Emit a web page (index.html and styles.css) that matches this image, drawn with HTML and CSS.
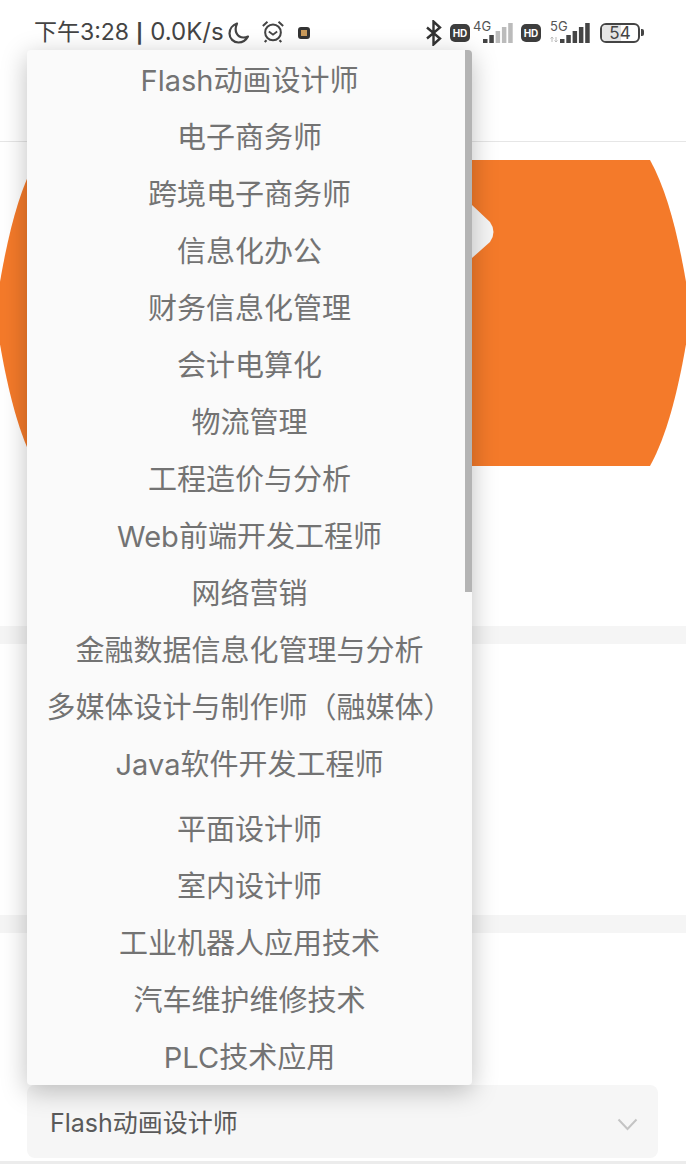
FILE: index.html
```html
<!DOCTYPE html>
<html lang="zh-CN">

<head>
  <meta charset="UTF-8" />
  <meta name="viewport" content="width=device-width, initial-scale=1.0" />
  <title>专业选择</title>
  <link rel="stylesheet" href="styles.css">
</head>

<body>
  <div class="page">
    <div class="status-bar">
      <div class="status-left">
        <span class="status-time">下午3:28<span class="status-sep">|</span><span class="status-speed">0.0K/s</span></span>
        <svg class="icon-moon" width="24" height="24" viewBox="0 0 24 24">
          <path d="M10 2.500C5.500 4 2.500 8 2.500 12.500c0 5 4 9 9 9 4 0 7.500-2.300 9.500-6-1.500.7-3 1-4.500 1-6 0-10-6-6.500-14z" fill="none" stroke="#444" stroke-width="2.200" stroke-linejoin="round" />
        </svg>
        <svg class="icon-alarm" width="24" height="24" viewBox="0 0 26 26">
          <circle cx="13" cy="14.500" r="8.500" fill="none" stroke="#444" stroke-width="2.200" />
          <path d="M8.500 13.500l4.500 3.500 4.500-3.500" fill="none" stroke="#444" stroke-width="2" />
          <path d="M2 7.500L7 3M24 7.500L19 3M6 23l-2 2M20 23l2 2" fill="none" stroke="#444" stroke-width="2.200" />
        </svg>
        <span class="notify-dot"></span>
      </div>
      <div class="status-right">
        <svg class="icon-bt" width="17" height="26" viewBox="0 0 17 26">
          <path d="M2 7.500l13 11-6.500 6V1.500l6.500 6-13 11" fill="none" stroke="#333" stroke-width="2.400" />
        </svg>
        <span class="hd-badge">HD</span>
        <svg class="icon-signal sim-one" width="40" height="32" viewBox="0 0 40 32">
          <text x="0" y="14" class="net-label">4G</text>
          <rect x="10" y="22" width="4.500" height="4" fill="#444" />
          <rect x="16.300" y="18" width="4.500" height="8" fill="#444" />
          <rect x="22.600" y="14" width="4.500" height="12" fill="#bbb" />
          <rect x="28.900" y="10" width="4.500" height="16" fill="#bbb" />
          <rect x="35.200" y="6" width="4.500" height="20" fill="#bbb" />
        </svg>
        <span class="hd-badge">HD</span>
        <svg class="icon-signal sim-two" width="41" height="32" viewBox="0 0 41 32">
          <text x="0" y="14" class="net-label">5G</text>
          <path d="M2 20v5M0.500 21.500L2 20l1.500 1.500M6 20v5M4.500 23.500L6 25l1.500-1.500" fill="none" stroke="#bbb" stroke-width="1" />
          <rect x="10" y="22" width="4.500" height="4" fill="#444" />
          <rect x="16.300" y="18" width="4.500" height="8" fill="#444" />
          <rect x="22.600" y="14" width="4.500" height="12" fill="#444" />
          <rect x="28.900" y="10" width="4.500" height="16" fill="#444" />
          <rect x="35.200" y="6" width="4.500" height="20" fill="#444" />
        </svg>
        <div class="battery">
          <span class="battery-fill"></span>
          <span class="battery-text">54</span>
        </div>
        <span class="battery-nub"></span>
      </div>
    </div>

    <div class="top-bar"></div>

    <div class="banner">
      <svg width="686" height="306" viewBox="0 0 686 306">
        <path d="M36 0H650C670 36 682 92 691 153C682 214 670 270 650 306H36C16 270 4 214 -5 153C4 92 16 36 36 0Z" fill="#f47a2a" />
        <path d="M440 26L472 45L490 62Q497 72 490 82L472 98L440 118Z" fill="#f6f6f6" />
      </svg>
    </div>

    <div class="section section-first"></div>
    <div class="section section-second"></div>

    <div class="section section-last">
      <div class="select-box">
        <span class="select-value">Flash动画设计师</span>
        <svg class="select-arrow" width="21" height="13" viewBox="0 0 21 13">
          <path d="M1.500 1.500L10.500 11L19.500 1.500" fill="none" stroke="#c4c4c4" stroke-width="2" />
        </svg>
      </div>
    </div>

    <div class="dropdown">
      <div class="dropdown-item">Flash动画设计师</div>
      <div class="dropdown-item">电子商务师</div>
      <div class="dropdown-item">跨境电子商务师</div>
      <div class="dropdown-item">信息化办公</div>
      <div class="dropdown-item">财务信息化管理</div>
      <div class="dropdown-item">会计电算化</div>
      <div class="dropdown-item">物流管理</div>
      <div class="dropdown-item">工程造价与分析</div>
      <div class="dropdown-item">Web前端开发工程师</div>
      <div class="dropdown-item">网络营销</div>
      <div class="dropdown-item">金融数据信息化管理与分析</div>
      <div class="dropdown-item">多媒体设计与制作师（融媒体）</div>
      <div class="dropdown-item group-end">Java软件开发工程师</div>
      <div class="dropdown-item">平面设计师</div>
      <div class="dropdown-item">室内设计师</div>
      <div class="dropdown-item">工业机器人应用技术</div>
      <div class="dropdown-item">汽车维护维修技术</div>
      <div class="dropdown-item">PLC技术应用</div>
      <div class="scroll-thumb"></div>
    </div>
  </div>
</body>

</html>
```

FILE: styles.css
```css
* {
  margin: 0;
  padding: 0;
  box-sizing: border-box;
}

body {
  background-color: #fff;
  font-family: "Inter", "Noto Sans CJK SC", sans-serif;
  color: #666;
}

.page {
  position: relative;
  width: 686px;
  height: 1164px;
  overflow: hidden;
  display: flex;
  flex-direction: column;
}

.status-bar {
  height: 64px;
  padding: 19px 42px 0 34px;
  display: flex;
  justify-content: space-between;
  align-items: flex-start;
  color: #444;
}

.status-left,
.status-right {
  display: flex;
  align-items: center;
  height: 27px;
}

.status-time {
  font-size: 23px;
  line-height: 27px;
  white-space: nowrap;
}

.status-sep {
  margin: 0 7px;
  font-size: 19px;
  font-weight: 700;
}

.status-speed {
  font-size: 24px;
}

.icon-moon {
  margin-left: 3px;
}

.icon-alarm {
  margin-left: 10px;
  margin-bottom: 3px;
}

.notify-dot {
  width: 12px;
  height: 12px;
  margin-left: 13px;
  border-radius: 3px;
  background-color: #c99a5b;
  border: 3px solid #333;
}

.hd-badge {
  width: 20px;
  height: 18px;
  margin-left: 8px;
  border-radius: 5px;
  background-color: #3d3d3d;
  color: #fff;
  font-size: 10px;
  font-weight: 700;
  line-height: 18px;
  text-align: center;
}

.icon-signal {
  margin-left: 3px;
}

.sim-two {
  margin-left: 9px;
}

.net-label {
  font-size: 13px;
  fill: #555;
}

.battery {
  position: relative;
  width: 40px;
  height: 20px;
  margin-left: 9px;
  border: 2px solid #444;
  border-radius: 6px;
  font-size: 17px;
  line-height: 16px;
  text-align: center;
  overflow: hidden;
}

.battery-fill {
  position: absolute;
  left: 0;
  top: 0;
  bottom: 0;
  width: 54%;
  background-color: #e4e4e4;
}

.battery-text {
  position: relative;
}

.battery-nub {
  width: 3px;
  height: 7px;
  margin-left: 1px;
  background-color: #444;
  border-radius: 0 2px 2px 0;
}

.top-bar {
  height: 78px;
  border-bottom: 1px solid #e6e6e6;
}

.banner {
  height: 306px;
  margin-top: 18px;
}

.banner svg {
  display: block;
}

.section {
  border-bottom: 18px solid #f5f5f5;
}

.section-first {
  height: 178px;
}

.section-second {
  height: 289px;
}

.section-last {
  flex: 1;
  padding: 152px 28px 0 27px;
  border-bottom: 3px solid #ececec;
}

.select-box {
  height: 73px;
  padding: 0 20px 0 23px;
  display: flex;
  justify-content: space-between;
  align-items: center;
  border-radius: 8px;
  background-color: #f6f6f6;
  font-size: 25px;
  color: #5a5a5a;
}

.select-value {
  margin-bottom: 2px;
}

.select-arrow {
  margin-top: 5px;
}

.dropdown {
  position: absolute;
  left: 27px;
  top: 50px;
  width: 445px;
  height: 1035px;
  padding-top: 2px;
  background-color: #fafafa;
  border-radius: 4px;
  box-shadow: 0 6px 26px rgba(0, 0, 0, 0.25);
  overflow: hidden;
}

.dropdown-item {
  height: 57px;
  font-size: 29px;
  line-height: 57px;
  text-align: center;
  white-space: nowrap;
  color: #737373;
}

.group-end {
  margin-bottom: 8px;
}

.scroll-thumb {
  position: absolute;
  right: 0;
  top: 0;
  width: 7px;
  height: 542px;
  background-color: #b4b4b4;
}
```
